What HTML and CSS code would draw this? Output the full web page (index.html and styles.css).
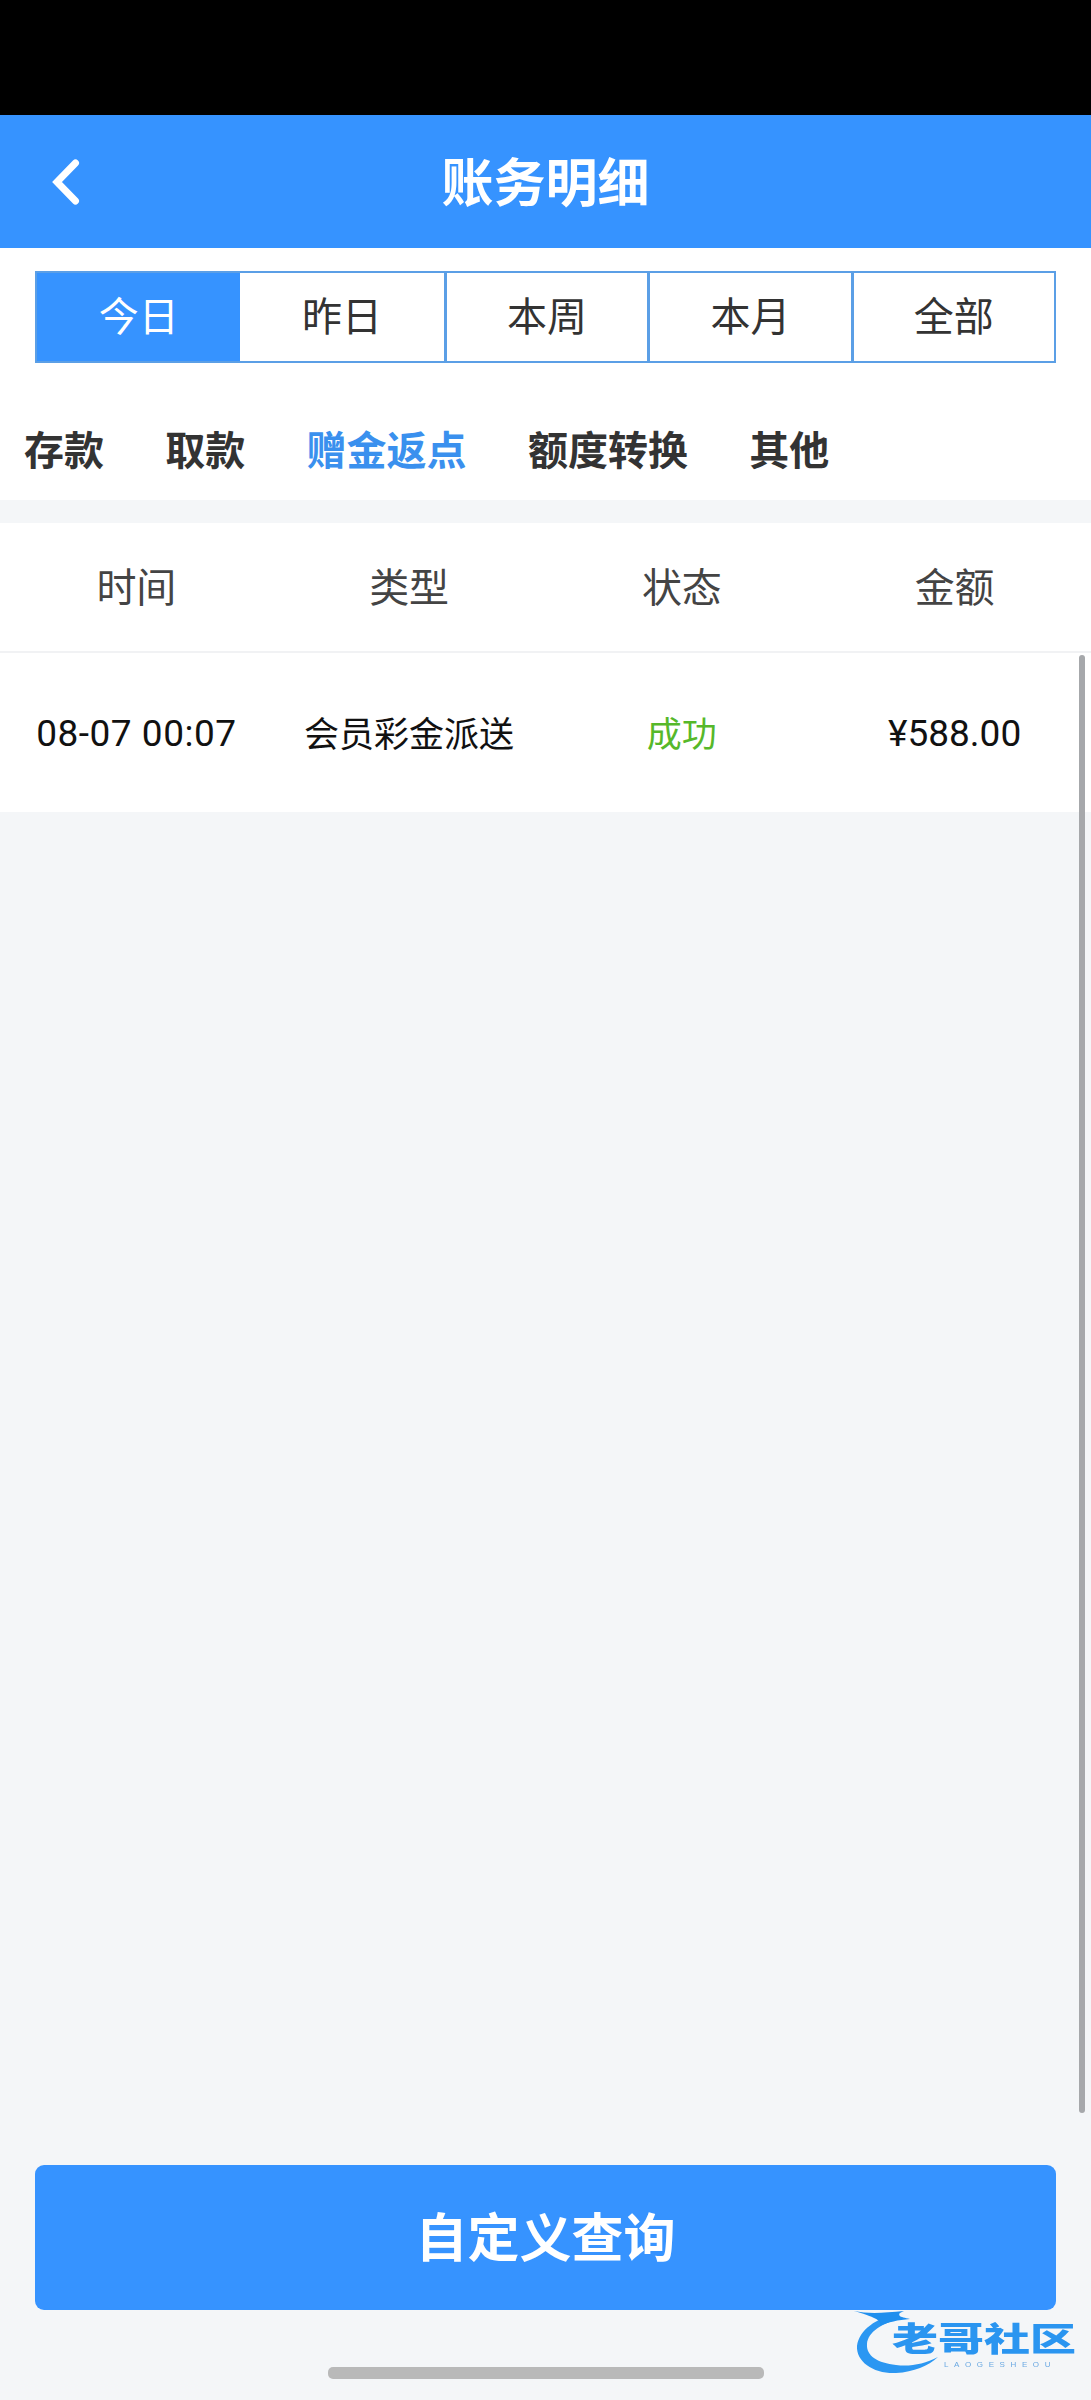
FILE: index.html
```html
<!DOCTYPE html>
<html lang="zh-CN">
<head>
<meta charset="utf-8">
<title>账务明细</title>
<link rel="stylesheet" href="styles.css">
</head>
<body>
<div class="app">
  <div class="statusbar"></div>
  <header class="navbar">
    <svg class="back" viewBox="0 0 28 46" width="28" height="46" aria-hidden="true">
      <path d="M23.5 4 L5 23 L23.5 42" fill="none" stroke="#fff" stroke-width="7" stroke-linecap="round" stroke-linejoin="miter"/>
    </svg>
    <h1 class="navbar-title">账务明细</h1>
  </header>

  <section class="filters">
    <div class="range">
      <div class="range-item is-active">今日</div>
      <div class="range-item">昨日</div>
      <div class="range-item">本周</div>
      <div class="range-item">本月</div>
      <div class="range-item">全部</div>
    </div>
    <nav class="tabs">
      <span class="tab">存款</span>
      <span class="tab">取款</span>
      <span class="tab is-active">赠金返点</span>
      <span class="tab">额度转换</span>
      <span class="tab">其他</span>
    </nav>
  </section>

  <main class="records">
    <div class="row row-head">
      <div class="cell">时间</div>
      <div class="cell">类型</div>
      <div class="cell">状态</div>
      <div class="cell">金额</div>
    </div>
    <div class="row row-data">
      <div class="cell cell-num cell-time">08-07 00:07</div>
      <div class="cell">会员彩金派送</div>
      <div class="cell status-ok">成功</div>
      <div class="cell cell-num">¥588.00</div>
    </div>
    <div class="scrollbar"></div>
  </main>

  <footer class="footer">
    <button class="query" type="button">自定义查询</button>
    <div class="home-bar"></div>
    <div class="brand">
      <svg class="brand-mark" viewBox="0 0 90 66" width="90" height="66" aria-hidden="true">
        <path d="M45 3 C22 8 5 20 3 36 C2 52 20 64 42 63 C60 62 74 56 84 47 C70 54 56 57 42 55 C24 53 12 46 13 34 C14 22 28 13 46 9 Z" fill="#2b97f2"/>
        <path d="M0 1 C14 4 30 3 50 1 C40 5 46 7 56 9 C44 10 34 12 26 16 C28 10 20 7 0 1 Z" fill="#1f8fee"/>
      </svg>
      <div class="brand-name">老哥社区</div>
      <div class="brand-sub">LAOGESHEOU</div>
    </div>
  </footer>
</div>
</body>
</html>
```
FILE: styles.css
```css
* { box-sizing: border-box; }

html, body {
  margin: 0;
  padding: 0;
}

body {
  font-family: "Noto Sans CJK SC", "Noto Sans", sans-serif;
  color: #333;
  background: #f4f6f8;
}

.app {
  width: 1091px;
  height: 2400px;
  display: flex;
  flex-direction: column;
  overflow: hidden;
}

.statusbar {
  height: 115px;
  background: #000;
  flex: none;
}

.navbar {
  height: 133px;
  flex: none;
  background: #3693ff;
  display: flex;
  align-items: center;
  justify-content: center;
  position: relative;
  padding-bottom: 3px;
}

.back {
  position: absolute;
  left: 52px;
  top: 44px;
}

.navbar-title {
  margin: 0;
  font-size: 52px;
  line-height: 66px;
  font-weight: 700;
  color: #fff;
}

.filters {
  flex: none;
  height: 252px;
  background: #fff;
  padding-top: 23px;
}

.range {
  margin: 0 35px;
  height: 92px;
  display: grid;
  grid-template-columns: repeat(5, 1fr);
  border: 2px solid #5b9fe6;
}

.range-item {
  display: flex;
  align-items: center;
  justify-content: center;
  font-size: 40px;
  color: #333;
  border-left: 3px solid #5b9fe6;
  padding-bottom: 6px;
}

.range-item:first-child {
  border-left: 0;
}

.range-item.is-active {
  background: #3693ff;
  color: #fff;
}

.range-item.is-active + .range-item {
  border-left: 0;
}

.tabs {
  display: flex;
  gap: 61.3px;
  padding: 55px 0 0 24px;
}

.tab {
  font-size: 40px;
  line-height: 60px;
  font-weight: 700;
  color: #333;
}

.tab.is-active {
  color: #3a90ee;
}

.records {
  flex: 1;
  margin-top: 23px;
  position: relative;
}

.row {
  display: grid;
  grid-template-columns: repeat(4, 1fr);
  align-items: center;
  background: #fff;
  text-align: center;
}

.row-head {
  height: 130px;
  font-size: 40px;
  color: #444;
  border-bottom: 2px solid #f1f2f4;
  padding-bottom: 4px;
}

.row-data {
  height: 159px;
  font-size: 35px;
  color: #111;
  padding-bottom: 2px;
}

.cell-num {
  font-family: "Roboto", "Noto Sans CJK SC", sans-serif;
  font-size: 37px;
  padding-top: 4px;
}

.cell-time {
  letter-spacing: 0.5px;
}

.status-ok {
  color: #56b82a;
}

.scrollbar {
  position: absolute;
  left: 1079px;
  top: 132px;
  width: 6px;
  height: 1458px;
  border-radius: 3px;
  background: #a6a8ab;
}

.footer {
  flex: none;
  height: 235px;
  position: relative;
  padding: 0 35px;
}

.query {
  display: block;
  width: 100%;
  height: 145px;
  border: 0;
  border-radius: 9px;
  background: #3693ff;
  color: #fff;
  font-family: inherit;
  font-size: 52px;
  font-weight: 700;
  padding: 0 0 6px;
}

.home-bar {
  width: 436px;
  height: 12px;
  margin: 57px auto 0;
  border-radius: 5px;
  background: #b9b9b9;
}

/* Site mark sitting over the lower right corner */
.brand {
  position: absolute;
  left: 854px;
  top: 145px;
  width: 224px;
  height: 66px;
  filter: blur(0.6px);
}

.brand-mark {
  position: absolute;
  left: 0;
  top: 0;
}

.brand-name {
  position: absolute;
  left: 38px;
  top: 9px;
  font-size: 46px;
  line-height: 50px;
  font-weight: 900;
  white-space: nowrap;
  color: #2a95f0;
  transform: scaleY(0.72);
  transform-origin: left top;
}

.brand-sub {
  position: absolute;
  left: 90px;
  top: 50px;
  font-family: "Liberation Sans", sans-serif;
  font-size: 8px;
  line-height: 9px;
  letter-spacing: 5.6px;
  color: #6ba9e2;
  white-space: nowrap;
}
```
